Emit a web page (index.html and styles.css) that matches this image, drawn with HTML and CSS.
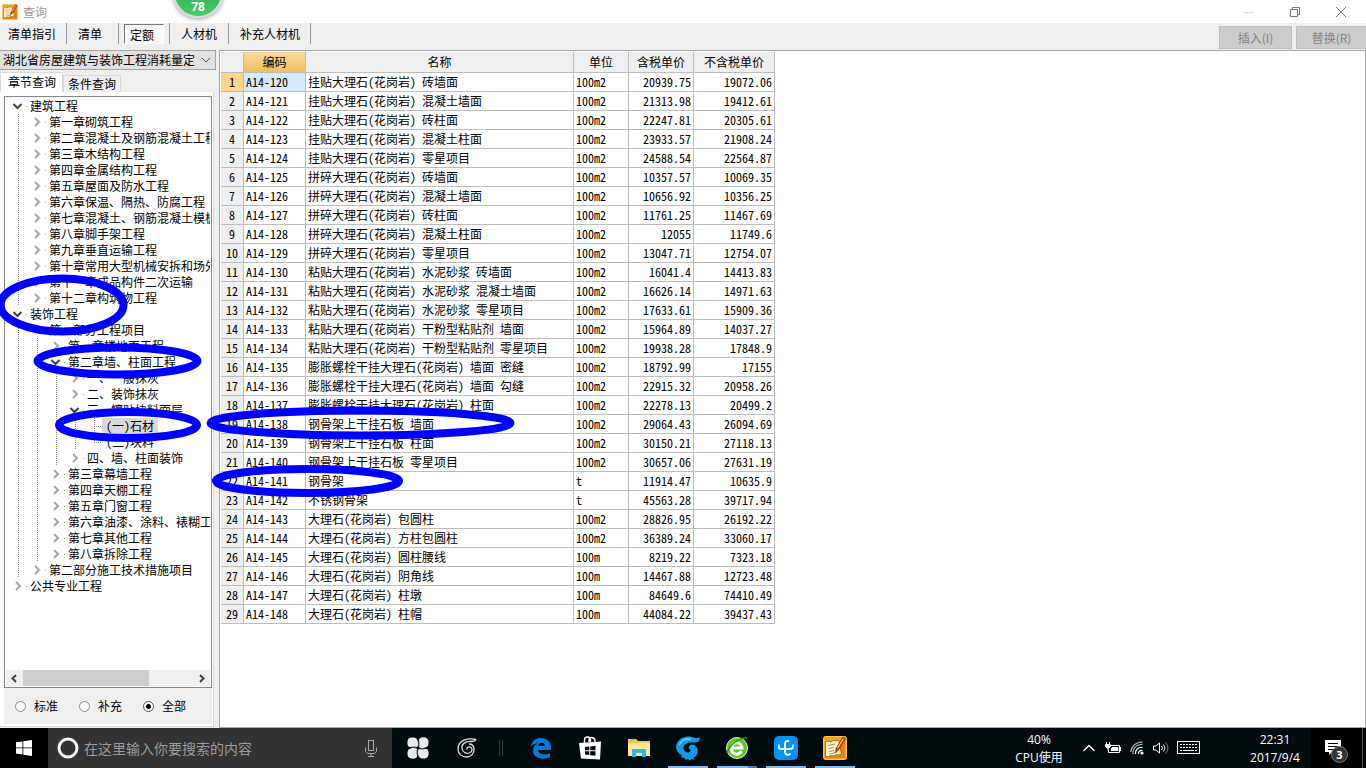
FILE: index.html
```html
<!DOCTYPE html>
<html lang="zh-CN">
<head>
<meta charset="utf-8">
<title>查询</title>
<link rel="stylesheet" href="styles.css">
</head>
<body>
<svg class="defs" aria-hidden="true">
  <symbol id="closed" viewBox="0 0 13 16"><path d="M5 4l4 4-4 4" fill="none" stroke="#a6a6a6" stroke-width="2"/></symbol>
  <symbol id="open" viewBox="0 0 13 16"><path d="M2.500 6l4 4 4-4" fill="none" stroke="#404040" stroke-width="2"/></symbol>
  <symbol id="notes" viewBox="0 0 24 24">
    <rect x="0.500" y="0.500" width="23" height="23" rx="2" fill="#f7a51d" stroke="#ffc355"/>
    <path d="M2 22L22 2v20z" fill="#e8820a"/>
    <path d="M2.500 6l3-1 2 1 3-1.500 2 .5 3-1 3 14-3 1-2-.5-3 1.500-2-.5-3 1-3 .5z" fill="#fff6da" stroke="#9c5206" stroke-width=".8"/>
    <path d="M5 9.500l7-1.500M5.500 12.500l5-1M6 15.500l5-1M6.500 18l7-1.500" stroke="#b08a4a"/>
    <path d="M20 1l2.500 1.500-6.500 11-3.500 3 .8-4.500z" fill="#c6401b" stroke="#7c2708" stroke-width=".7"/>
    <path d="M20.500 2.500L14.500 12" stroke="#ffd36b" stroke-width="1.200"/>
  </symbol>
</svg>

<div class="window">
  <header class="titlebar">
    <svg class="app-icon"><use href="#notes"/></svg>
    <h1 class="title">查询</h1>
    <div class="window-controls">
      <button class="win-btn" aria-label="最小化" disabled><svg width="12" height="12"><path d="M1 6.500h10" stroke="#ddd"/></svg></button>
      <button class="win-btn" aria-label="还原"><svg width="12" height="12" fill="none" stroke="#777"><path d="M1.500 3.500h7v7h-7zM3.500 3.500v-2h7v7h-2"/></svg></button>
      <button class="win-btn" aria-label="关闭"><svg width="12" height="12"><path d="M1 1l10 10M11 1L1 11" stroke="#777"/></svg></button>
    </div>
  </header>
  <div class="speed-ball">78</div>

  <nav class="toolbar">
    <button class="tool">清单指引</button>
    <button class="tool">清单</button>
    <button class="tool tool-pressed"><span>定额</span></button>
    <button class="tool">人材机</button>
    <button class="tool">补充人材机</button>
    <div class="actions">
      <button class="action" disabled>插入(I)</button>
      <button class="action" disabled>替换(R)</button>
    </div>
  </nav>

  <div class="content">
    <aside class="sidebar">
      <select class="library" aria-label="定额库"><option>湖北省房屋建筑与装饰工程消耗量定</option></select>
      <div class="tabs">
        <button class="tab tab-active">章节查询</button>
        <button class="tab">条件查询</button>
      </div>
      <div class="tab-panel">
        <div class="tree-box">
          <ul class="tree">
            <li><div class="node"><svg><use href="#open"/></svg>建筑工程</div>
              <ul>
                <li><div class="node"><svg><use href="#closed"/></svg>第一章砌筑工程</div></li>
                <li><div class="node"><svg><use href="#closed"/></svg>第二章混凝土及钢筋混凝土工程</div></li>
                <li><div class="node"><svg><use href="#closed"/></svg>第三章木结构工程</div></li>
                <li><div class="node"><svg><use href="#closed"/></svg>第四章金属结构工程</div></li>
                <li><div class="node"><svg><use href="#closed"/></svg>第五章屋面及防水工程</div></li>
                <li><div class="node"><svg><use href="#closed"/></svg>第六章保温、隔热、防腐工程</div></li>
                <li><div class="node"><svg><use href="#closed"/></svg>第七章混凝土、钢筋混凝土模板</div></li>
                <li><div class="node"><svg><use href="#closed"/></svg>第八章脚手架工程</div></li>
                <li><div class="node"><svg><use href="#closed"/></svg>第九章垂直运输工程</div></li>
                <li><div class="node"><svg><use href="#closed"/></svg>第十章常用大型机械安拆和场外</div></li>
                <li><div class="node"><svg><use href="#closed"/></svg>第十一章成品构件二次运输</div></li>
                <li><div class="node"><svg><use href="#closed"/></svg>第十二章构筑物工程</div></li>
              </ul>
            </li>
            <li><div class="node"><svg><use href="#open"/></svg>装饰工程</div>
              <ul>
                <li><div class="node"><svg><use href="#open"/></svg>第一部分工程项目</div>
                  <ul>
                    <li><div class="node"><svg><use href="#closed"/></svg>第一章楼地面工程</div></li>
                    <li><div class="node"><svg><use href="#open"/></svg>第二章墙、柱面工程</div>
                      <ul>
                        <li><div class="node"><svg><use href="#closed"/></svg>一、一般抹灰</div></li>
                        <li><div class="node"><svg><use href="#closed"/></svg>二、装饰抹灰</div></li>
                        <li><div class="node"><svg><use href="#open"/></svg>三、镶贴块料面层</div>
                          <ul>
                            <li class="leaf"><span class="leaf-text leaf-selected">(一)石材</span></li>
                            <li class="leaf"><span class="leaf-text">(二)块料</span></li>
                          </ul>
                        </li>
                        <li><div class="node"><svg><use href="#closed"/></svg>四、墙、柱面装饰</div></li>
                      </ul>
                    </li>
                    <li><div class="node"><svg><use href="#closed"/></svg>第三章幕墙工程</div></li>
                    <li><div class="node"><svg><use href="#closed"/></svg>第四章天棚工程</div></li>
                    <li><div class="node"><svg><use href="#closed"/></svg>第五章门窗工程</div></li>
                    <li><div class="node"><svg><use href="#closed"/></svg>第六章油漆、涂料、裱糊工</div></li>
                    <li><div class="node"><svg><use href="#closed"/></svg>第七章其他工程</div></li>
                    <li><div class="node"><svg><use href="#closed"/></svg>第八章拆除工程</div></li>
                  </ul>
                </li>
                <li><div class="node"><svg><use href="#closed"/></svg>第二部分施工技术措施项目</div></li>
              </ul>
            </li>
            <li><div class="node"><svg><use href="#closed"/></svg>公共专业工程</div></li>
          </ul>
          <div class="scrollbar">
            <button class="scroll-arrow" aria-label="向左滚动"><svg width="17" height="15"><path d="M10 4L6.500 7.500 10 11" fill="none" stroke="#444" stroke-width="2"/></svg></button>
            <div class="scroll-track"><div class="scroll-thumb"></div></div>
            <button class="scroll-arrow" aria-label="向右滚动"><svg width="17" height="15"><path d="M7 4l3.500 3.500L7 11" fill="none" stroke="#444" stroke-width="2"/></svg></button>
          </div>
        </div>
        <div class="filters">
          <label class="filter"><input type="radio" name="scope">标准</label>
          <label class="filter"><input type="radio" name="scope">补充</label>
          <label class="filter"><input type="radio" name="scope" checked>全部</label>
        </div>
      </div>
    </aside>

    <main class="grid-pane">
      <table class="grid">
        <colgroup><col class="c-no"><col class="c-code"><col class="c-name"><col class="c-unit"><col class="c-taxed"><col class="c-untaxed"></colgroup>
        <thead>
          <tr><th></th><th class="sorted">编码</th><th>名称</th><th>单位</th><th>含税单价</th><th>不含税单价</th></tr>
        </thead>
        <tbody>
          <tr class="current"><th>1</th><td>A14-120</td><td>挂贴大理石(花岗岩) 砖墙面</td><td>100m2</td><td>20939.75</td><td>19072.06</td></tr>
          <tr><th>2</th><td>A14-121</td><td>挂贴大理石(花岗岩) 混凝土墙面</td><td>100m2</td><td>21313.98</td><td>19412.61</td></tr>
          <tr><th>3</th><td>A14-122</td><td>挂贴大理石(花岗岩) 砖柱面</td><td>100m2</td><td>22247.81</td><td>20305.61</td></tr>
          <tr><th>4</th><td>A14-123</td><td>挂贴大理石(花岗岩) 混凝土柱面</td><td>100m2</td><td>23933.57</td><td>21908.24</td></tr>
          <tr><th>5</th><td>A14-124</td><td>挂贴大理石(花岗岩) 零星项目</td><td>100m2</td><td>24588.54</td><td>22564.87</td></tr>
          <tr><th>6</th><td>A14-125</td><td>拼碎大理石(花岗岩) 砖墙面</td><td>100m2</td><td>10357.57</td><td>10069.35</td></tr>
          <tr><th>7</th><td>A14-126</td><td>拼碎大理石(花岗岩) 混凝土墙面</td><td>100m2</td><td>10656.92</td><td>10356.25</td></tr>
          <tr><th>8</th><td>A14-127</td><td>拼碎大理石(花岗岩) 砖柱面</td><td>100m2</td><td>11761.25</td><td>11467.69</td></tr>
          <tr><th>9</th><td>A14-128</td><td>拼碎大理石(花岗岩) 混凝土柱面</td><td>100m2</td><td>12055</td><td>11749.6</td></tr>
          <tr><th>10</th><td>A14-129</td><td>拼碎大理石(花岗岩) 零星项目</td><td>100m2</td><td>13047.71</td><td>12754.07</td></tr>
          <tr><th>11</th><td>A14-130</td><td>粘贴大理石(花岗岩) 水泥砂浆 砖墙面</td><td>100m2</td><td>16041.4</td><td>14413.83</td></tr>
          <tr><th>12</th><td>A14-131</td><td>粘贴大理石(花岗岩) 水泥砂浆 混凝土墙面</td><td>100m2</td><td>16626.14</td><td>14971.63</td></tr>
          <tr><th>13</th><td>A14-132</td><td>粘贴大理石(花岗岩) 水泥砂浆 零星项目</td><td>100m2</td><td>17633.61</td><td>15909.36</td></tr>
          <tr><th>14</th><td>A14-133</td><td>粘贴大理石(花岗岩) 干粉型粘贴剂 墙面</td><td>100m2</td><td>15964.89</td><td>14037.27</td></tr>
          <tr><th>15</th><td>A14-134</td><td>粘贴大理石(花岗岩) 干粉型粘贴剂 零星项目</td><td>100m2</td><td>19938.28</td><td>17848.9</td></tr>
          <tr><th>16</th><td>A14-135</td><td>膨胀螺栓干挂大理石(花岗岩) 墙面 密缝</td><td>100m2</td><td>18792.99</td><td>17155</td></tr>
          <tr><th>17</th><td>A14-136</td><td>膨胀螺栓干挂大理石(花岗岩) 墙面 勾缝</td><td>100m2</td><td>22915.32</td><td>20958.26</td></tr>
          <tr><th>18</th><td>A14-137</td><td>膨胀螺栓干挂大理石(花岗岩) 柱面</td><td>100m2</td><td>22278.13</td><td>20499.2</td></tr>
          <tr><th>19</th><td>A14-138</td><td>钢骨架上干挂石板 墙面</td><td>100m2</td><td>29064.43</td><td>26094.69</td></tr>
          <tr><th>20</th><td>A14-139</td><td>钢骨架上干挂石板 柱面</td><td>100m2</td><td>30150.21</td><td>27118.13</td></tr>
          <tr><th>21</th><td>A14-140</td><td>钢骨架上干挂石板 零星项目</td><td>100m2</td><td>30657.06</td><td>27631.19</td></tr>
          <tr><th>22</th><td>A14-141</td><td>钢骨架</td><td>t</td><td>11914.47</td><td>10635.9</td></tr>
          <tr><th>23</th><td>A14-142</td><td>不锈钢骨架</td><td>t</td><td>45563.28</td><td>39717.94</td></tr>
          <tr><th>24</th><td>A14-143</td><td>大理石(花岗岩) 包圆柱</td><td>100m2</td><td>28826.95</td><td>26192.22</td></tr>
          <tr><th>25</th><td>A14-144</td><td>大理石(花岗岩) 方柱包圆柱</td><td>100m2</td><td>36389.24</td><td>33060.17</td></tr>
          <tr><th>26</th><td>A14-145</td><td>大理石(花岗岩) 圆柱腰线</td><td>100m</td><td>8219.22</td><td>7323.18</td></tr>
          <tr><th>27</th><td>A14-146</td><td>大理石(花岗岩) 阴角线</td><td>100m</td><td>14467.88</td><td>12723.48</td></tr>
          <tr><th>28</th><td>A14-147</td><td>大理石(花岗岩) 柱墩</td><td>100m</td><td>84649.6</td><td>74410.49</td></tr>
          <tr><th>29</th><td>A14-148</td><td>大理石(花岗岩) 柱帽</td><td>100m</td><td>44084.22</td><td>39437.43</td></tr>
        </tbody>
      </table>
    </main>
  </div>

  <svg class="marks" width="520" height="500" aria-hidden="true">
    <ellipse cx="62" cy="305" rx="61.500" ry="26.500"/>
    <ellipse cx="117.500" cy="361" rx="80" ry="13.500"/>
    <ellipse cx="128" cy="425" rx="69" ry="13"/>
    <ellipse cx="360.500" cy="423" rx="150" ry="12.500"/>
    <ellipse cx="307.500" cy="481" rx="91.500" ry="12"/>
  </svg>
</div>

<footer class="taskbar">
  <button class="start" aria-label="开始"><svg width="16" height="16" fill="#fff"><path d="M0 2.300l6.500-.9v6.100H0zM7.300 1.200L16 0v7.500H7.300zM0 8.300h6.500v6.200L0 13.600zM7.300 8.300H16V16l-8.700-1.200z"/></svg></button>
  <div class="search">
    <svg class="cortana" width="24" height="24"><circle cx="12" cy="12" r="9" fill="none" stroke="#f4f4f4" stroke-width="3"/></svg>
    <input class="search-input" type="text" placeholder="在这里输入你要搜索的内容" aria-label="搜索">
    <svg class="mic" width="14" height="18" fill="none" stroke="#a8a8a8"><rect x="4.500" y="1.500" width="5" height="10"/><path d="M1.500 8.500v4l2 2h7l2-2v-4M7 14.500v3M4 17.500h6"/></svg>
  </div>
  <button class="app" aria-label="风车"><svg width="22" height="22" fill="#e8eaea"><path id="petal" d="M10.300 10.300C7 11.500 3 11 1 9 0 7 .2 3.500 1.500 1.800 3 .2 7.500 0 9.300 1.500c2 2 2.200 6 1 8.800z"/><use href="#petal" transform="rotate(90 11 11)"/><use href="#petal" transform="rotate(180 11 11)"/><use href="#petal" transform="rotate(270 11 11)"/><path d="M11 11C7.500 9.500 4.500 10 1 11.500M11 11c1.500-3.500 1-6.500-.5-10M11 11c3.500 1.500 6.500 1 10-.5M11 11c-1.500 3.500-1 6.500.5 10" fill="none" stroke="#000b0e"/></svg></button>
  <button class="app" aria-label="浏览器"><svg width="20" height="20" fill="none" stroke="#d9dddd" stroke-width="1.300"><path d="M19 1.500c-1 2-3 2-5 2C8 3 4.500 6 5 10.500c.5 4 4.500 5.500 7.500 4.500 3-1 3.500-5 .5-6-2-.5-3.500 1-3 2.500"/><path d="M19 1.500C11-.5 1 2 1 11c0 5 4 8 8.500 8 5 0 8-4 7.500-8.500C16.500 7 14 6 12 6"/></svg></button>
  <span class="divider"></span>
  <button class="app" aria-label="Edge"><svg width="22" height="22"><path d="M1 9.500C2 3.500 6 1 11 1c6 0 10 4 10 9.500V13H8c0 4 7 6 12 3v4.200C12 23.500 3 21 3 13.500 3 10 5 7.500 8 6.500 5 6.700 2.500 7.500 1 9.500zM8.200 9H15c0-4-6-4.500-6.800 0z" fill="#0a78d7"/></svg></button>
  <button class="app" aria-label="应用商店"><svg width="24" height="26"><path d="M6.500 9V5c0-4 6-4 6 0v2M11 7V5c0-4 6-3 6 1v3" fill="none" stroke="#fff" stroke-width="1.400"/><path d="M1 8l22-1.500-1 18L3 23.500z" fill="#fff"/><path d="M7 12l4.300-.5v3.800H7zM12.200 11.400l5.300-.6v4.500h-5.300zM7 16.200h4.300V20L7 19.600zM12.200 16.200h5.300v4.600l-5.300-.6z" fill="#000b0e"/></svg></button>
  <button class="app" aria-label="文件资源管理器"><svg width="22" height="20"><path d="M0 1h8l2 2h12v15H0z" fill="#f0c95c"/><path d="M0 5h22v13H0z" fill="#fde79b"/><path d="M4 19v-7q0-1 1-1h12q1 0 1 1v7h-4v-4H8v4z" fill="#37b3e6"/><path d="M2 2h5" stroke="#d7a62c"/></svg></button>
  <button class="app app-running" aria-label="G 浏览器"><svg width="26" height="26"><path d="M25 2c0 5-4 6-8 5.500-5-.5-9 2-8.500 6 .3 3 4 5 6 3.500 1.500-1 1-3-.5-3.200-1-2.300 1-4.300 3.500-4 4 .5 6 4 5 8-.5 2.500-2 4-4 5l.5 2-2.500-.8-1.500 1.500-2-1.500-2.500 1-1-2-3-.5V20C1 17 0 12 2 8 4.500 3 10 1 15 1.500c4 .5 8 3 10 .5z" fill="#149ae5"/><path d="M4 10c2-5 7-7 12-5.500" fill="none" stroke="#6bd0ff" stroke-width="1.500"/></svg></button>
  <button class="app app-running app-stacked" aria-label="安全浏览器"><svg width="24" height="24"><circle cx="12" cy="12" r="10.500" fill="#62c622" stroke="#dff5d0"/><path d="M6 12h11c-.5-7-10-7-10.500 0-.5 7 7 8 10 3" fill="none" stroke="#fff" stroke-width="3"/><path d="M2 17C5 8 14 2 22 2" fill="none" stroke="#2b9c16" stroke-width="1.500"/></svg></button>
  <button class="app app-running" aria-label="工具"><svg width="24" height="24"><rect width="24" height="24" rx="5" fill="#0593f5"/><path d="M14.500 5C12 4.500 11 6 11 8.500V16c0 3 3 3.500 5 2M5 9.500C4 12 5.500 13 8 13h7c3 0 4.500-1 4-3.500" fill="none" stroke="#fff" stroke-width="2" stroke-linecap="round"/></svg></button>
  <button class="app app-running" aria-label="计价软件"><svg width="24" height="24"><use href="#notes"/></svg></button>

  <div class="tray">
    <div class="cpu">40%<br>CPU使用</div>
    <button class="tray-btn" aria-label="显示隐藏的图标"><svg width="14" height="14"><path d="M1.500 10L7 4.500l5.500 5.500" fill="none" stroke="#fff" stroke-width="1.300"/></svg></button>
    <button class="tray-btn" aria-label="电源"><svg width="16" height="14" fill="none" stroke="#fff"><path d="M5.500 4.500h9v7h-11v-3M1.500 1v2M4.500 1v2M15.500 6v4"/><path d="M.5 3.500h5v2l-1.500 1.500h-2L.5 5.500zM3 7v2M7 6.500h6v3H6z" fill="#fff"/></svg></button>
    <button class="tray-btn" aria-label="网络"><svg width="14" height="14" fill="none" stroke="#fff" stroke-width="1.200"><path d="M8.500 13c-.5-2 1.500-4 4-3.500M5.500 13c-.5-4 3-7 7-6.500" /><path d="M3 13C2.500 7 7 3 12.500 3.500M.8 11C1.500 5 6 1 12.500 1" stroke="#a9b0b2"/><circle cx="12" cy="12" r="1" fill="#fff"/></svg></button>
    <button class="tray-btn" aria-label="音量"><svg width="16" height="14" fill="none" stroke="#fff"><path d="M.5 5v4H3l3.500 3V2L3 5z"/><path d="M8.500 5q2 2 0 4M10.500 3.500q3 3.500 0 7"/><path d="M12.500 1.500q5 5.500 0 11" stroke="#7d8688"/></svg></button>
    <button class="tray-btn keyboard" aria-label="输入法"><svg width="23" height="14" fill="none" stroke="#fff"><rect x=".5" y=".5" width="22" height="12"/><path d="M3 3.500h17M3 6.500h17" stroke-dasharray="2 1"/><path d="M3 9.500h2M6 9.500h11M18 9.500h2"/></svg></button>
    <div class="clock">22:31<br>2017/9/4</div>
    <button class="notice" aria-label="通知"><svg width="18" height="18"><path d="M1 1h16v12H8l-3 3v-3H1z" fill="#fff"/><path d="M4 4.500h10M4 7.500h10M4 10.500h5" stroke="#000"/></svg><span class="badge">3</span></button>
    <span class="desktop-edge"></span>
  </div>
</footer>
</body>
</html>
```

FILE: styles.css
```css
* { box-sizing: border-box; }

body {
  margin: 0;
  min-height: 100vh;
  display: flex;
  flex-direction: column;
  background: #fff;
  color: #000;
  font-family: "Noto Sans CJK SC", sans-serif;
  font-size: 12px;
  line-height: 16px;
}

button, input, select { font: inherit; color: inherit; }

button {
  padding: 0;
  border: 0;
  background: none;
  display: flex;
  align-items: center;
  justify-content: center;
}

svg { display: block; flex: none; }
.defs { position: absolute; width: 0; height: 0; }

.window {
  position: relative;
  flex: 1;
  display: flex;
  flex-direction: column;
}

/* title bar */
.titlebar {
  display: flex;
  align-items: center;
  height: 23px;
  padding-left: 2px;
}
.app-icon { width: 16px; height: 16px; }
.title {
  margin: 0 0 0 5px;
  font-size: 12px;
  font-weight: 400;
  color: #999;
}
.window-controls { display: flex; margin-left: auto; padding-right: 2px; }
.win-btn { width: 46px; height: 20px; }

.speed-ball {
  position: absolute;
  top: -32px;
  left: 173px;
  width: 50px;
  height: 50px;
  padding-top: 29px;
  border: 2px solid #d4dcd6;
  border-radius: 50%;
  background: linear-gradient(#35b85c 60%, #4ccb6c);
  box-shadow: 0 1px 5px rgba(0, 0, 0, .4);
  color: #fff;
  font: bold 12px/16px "Open Sans", sans-serif;
  text-align: center;
}

/* toolbar */
.toolbar {
  display: flex;
  align-items: flex-start;
  height: 27px;
  background: #efefef;
}
.tool {
  height: 21px;
  padding: 0 11px;
  border-right: 1px solid #999;
}
.tool:first-child { padding: 0 10px 0 8px; }
.tool:nth-child(2) { padding: 0 16px 0 11px; }
.tool:nth-child(5) { padding: 0 10px 0 11px; }
.tool-pressed { padding: 0 5px; }
.tool-pressed span {
  height: 20px;
  padding: 2px 9px 0 5px;
  border: 1px solid #fff;
  border-top-color: #777;
  border-left-color: #777;
  background: #f7f7f7;
}
.actions { display: flex; gap: 4px; margin-left: auto; padding-top: 3px; }
.action {
  width: 73px;
  height: 23px;
  border: 1px solid #bfbfbf;
  background: #ccc;
  color: #838383;
}
.action:last-child { width: 70px; border-right: 0; }

/* sidebar */
.content { flex: 1; display: flex; }
.sidebar {
  width: 219px;
  flex: none;
  display: flex;
  flex-direction: column;
  padding: 0 3px 1px 0;
  background: #efefef;
}
.library {
  appearance: none;
  width: 100%;
  height: 20px;
  padding: 0 20px 0 3px;
  border: 1px solid #a6a6a6;
  border-left: 0;
  border-radius: 0;
  background: #e1e1e1 url("data:image/svg+xml,%3Csvg xmlns='http://www.w3.org/2000/svg' width='10' height='6'%3E%3Cpath d='M1 1l4 4 4-4' fill='none' stroke='%23555'/%3E%3C/svg%3E") no-repeat right 4px center;
}
.tabs { display: flex; align-items: flex-end; margin-top: 2px; }
.tab {
  height: 17px;
  padding: 0 4px;
  border: 1px solid #d9d9d9;
  border-bottom: 0;
  background: #f0f0f0;
}
.tab-active { height: 20px; padding: 0 6px 2px 7px; background: #fff; }
.tab-panel {
  flex: 1;
  display: flex;
  flex-direction: column;
  margin-right: 2px;
  padding: 4px 1px 2px 4px;
  border-right: 1px solid #d9d9d9;
  border-bottom: 1px solid #d9d9d9;
  background: #fff;
}
.tree-box {
  flex: 1;
  display: flex;
  flex-direction: column;
  padding: 1px;
  border: 1px solid #828790;
}
.tree {
  flex: 1;
  padding: 0 0 0 5px;
  overflow: hidden;
  white-space: nowrap;
}
.tree, .tree ul { margin: 0; list-style: none; }
.tree ul {
  padding: 0 0 0 19px;
  background: repeating-linear-gradient(#888 0 1px, transparent 1px 2px) 7px 0 / 1px 100% no-repeat;
}
.node {
  display: flex;
  height: 16px;
  background: linear-gradient(#999, #999) 15px 8px / 1px 1px no-repeat;
}
.node svg { width: 13px; height: 16px; margin-right: 6px; }
.leaf {
  display: flex;
  height: 16px;
  padding-left: 15px;
  background:
    repeating-linear-gradient(#888 0 1px, transparent 1px 2px) 7px 0 / 1px 100% no-repeat,
    repeating-linear-gradient(90deg, #888 0 1px, transparent 1px 2px) 7px 8px / 8px 1px no-repeat;
}
.leaf:last-child { background-size: 1px 8px, 8px 1px; }
.leaf-text { padding: 0 4px; font-feature-settings: "hwid"; }
.leaf-selected { background: #d9d9d9; }

.scrollbar { display: flex; height: 16px; background: #f0f0f0; }
.scroll-arrow { width: 17px; }
.scroll-track { flex: 1; display: flex; }
.scroll-thumb { width: 74%; background: #cdcdcd; }

.filters {
  display: flex;
  gap: 16px;
  align-items: center;
  height: 36px;
  padding-left: 11px;
  background: #efefef;
}
.filter {
  display: flex;
  align-items: center;
  gap: 8px;
  width: 48px;
  white-space: nowrap;
}
.filter input {
  appearance: none;
  width: 11px;
  height: 11px;
  margin: 0;
  flex: none;
  border: 1px solid #888;
  border-radius: 50%;
  background: #fff;
}
.filter input:checked { background: radial-gradient(#000 0 2px, #fff 3px); border-color: #555; }

/* price grid */
.grid-pane {
  flex: 1;
  padding: 1px 0 0 1px;
  border: 1px solid #a6a6ae;
}
.grid {
  width: 554px;
  table-layout: fixed;
  border-spacing: 0;
  font-feature-settings: "hwid";
}
.c-no { width: 23px; }
.c-code { width: 62px; }
.c-name { width: 268px; }
.c-unit { width: 55px; }
.c-taxed { width: 65px; }
.c-untaxed { width: 81px; }
.grid th, .grid td {
  height: 19px;
  padding: 0 2px;
  border-right: 1px solid #bdbdbd;
  border-bottom: 1px solid #bdbdbd;
  font-weight: 400;
  text-align: left;
  white-space: nowrap;
}
.grid th { background: #efefef; text-align: center; }
.grid thead th { height: 21px; }
.grid td:nth-child(n+5) { text-align: right; }
.grid thead .sorted { background: linear-gradient(#f9d99f, #f0bf5d); }
.grid .current th { background: #ffd58c; }
.grid .current td:nth-child(2) { background: #d8e9f8; }

.marks { position: absolute; top: 0; left: 0; pointer-events: none; }
.marks ellipse { fill: none; stroke: #00f; stroke-width: 8; }

/* taskbar */
.taskbar {
  display: flex;
  height: 40px;
  background: #000b0e;
  color: #fff;
}
.start { width: 48px; background: #000; }
.search {
  display: flex;
  align-items: center;
  width: 344px;
  margin-right: 1px;
  padding: 0 14px 0 8px;
  background: #333;
}
.search-input {
  flex: 1;
  min-width: 0;
  padding: 0 0 0 4px;
  border: 0;
  background: none;
  font-size: 14px;
  line-height: 20px;
}
.search-input::placeholder { color: #9b9b9b; opacity: 1; }
.app { width: 49px; }
.app-running {
  background: linear-gradient(#7db9f0, #7db9f0) center bottom / 40px 2px no-repeat;
}
.app-stacked {
  background:
    linear-gradient(90deg, #7db9f0 31px, #4f7ba3 31px) center bottom / 40px 2px no-repeat;
}
.divider {
  width: 4px;
  height: 16px;
  margin: 12px 13px 0 8px;
  border: 1px solid #30393b;
  border-width: 0 1px;
}
.tray { display: flex; margin-left: auto; }
.cpu, .clock {
  padding-top: 3px;
  font: 12px/18px "Open Sans", "Noto Sans CJK SC", sans-serif;
  text-align: center;
}
.cpu { width: 76px; }
.tray-btn { width: 24px; }
.keyboard { width: 30px; }
.clock { width: 72px; margin-left: 36px; }
.notice { position: relative; width: 51px; padding-right: 8px; background: #000; }
.badge {
  position: absolute;
  top: 18px;
  left: 20px;
  width: 17px;
  height: 17px;
  border: 1px solid #777;
  border-radius: 50%;
  background: #333;
  font: bold 11px/15px "Open Sans", sans-serif;
  text-align: center;
}
.desktop-edge { width: 4px; border-left: 1px solid #555; background: #000; }
```
